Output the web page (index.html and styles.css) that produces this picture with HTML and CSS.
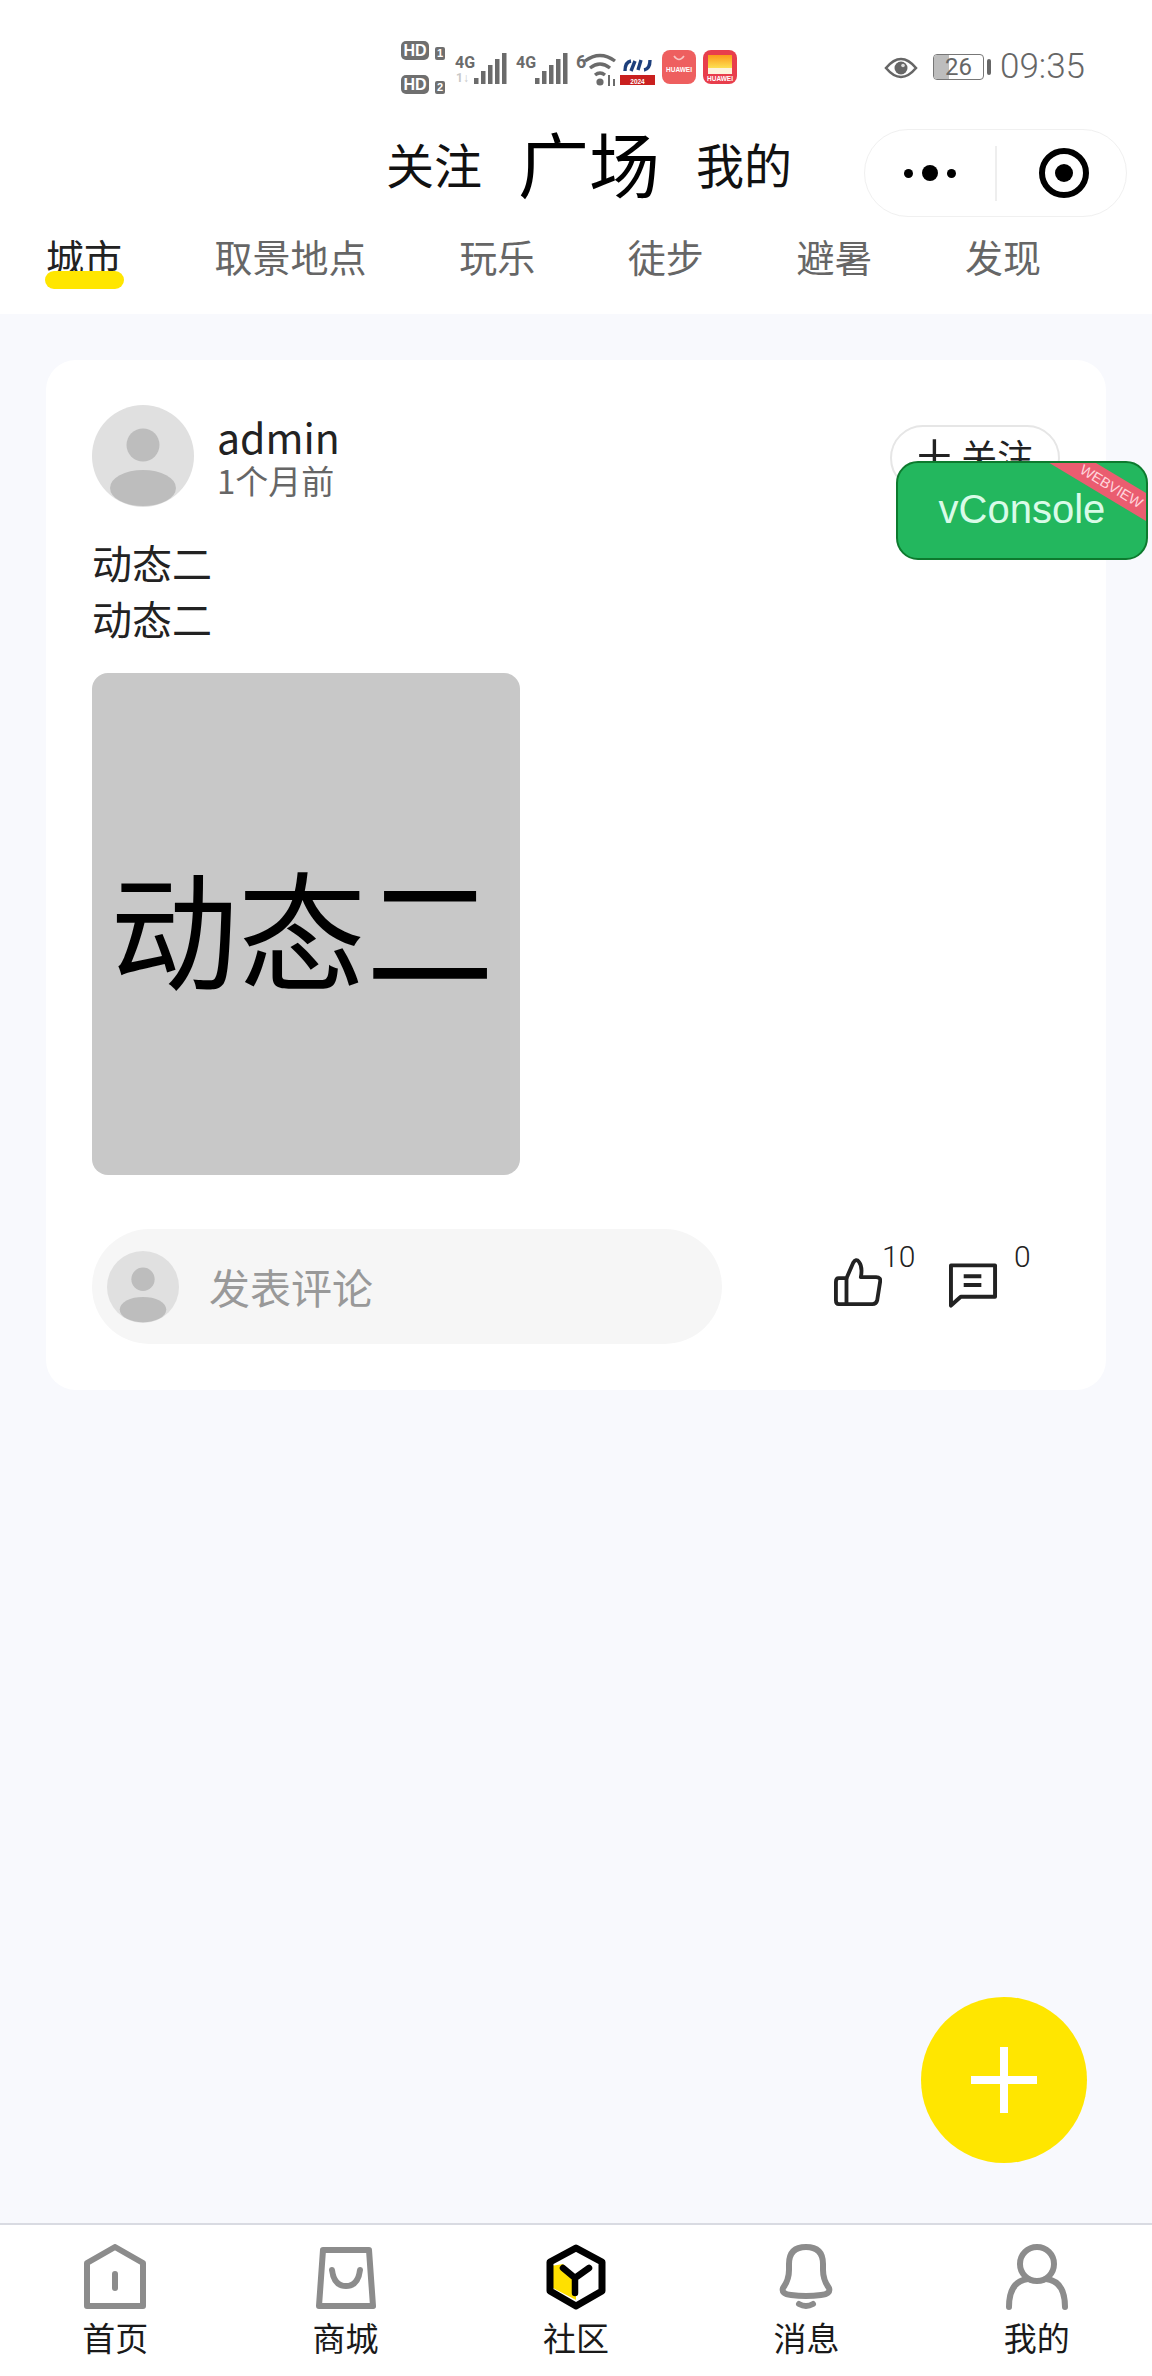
FILE: index.html
```html
<!DOCTYPE html>
<html lang="zh">
<head>
<meta charset="utf-8">
<title>广场</title>
<link rel="stylesheet" href="styles.css">
</head>
<body>
<div class="page">
  <header class="header">
    <div class="status">
      <div class="sims">
        <div class="sim"><span class="hd">HD</span><span class="simno">1</span></div>
        <div class="sim"><span class="hd">HD</span><span class="simno">2</span></div>
      </div>
      <svg class="signal" width="52" height="34" viewBox="0 0 52 34">
        <text x="0" y="16" class="net">4G</text>
        <text x="1" y="30" class="net faint">1↓</text>
        <rect x="19" y="26" width="4.500" height="6"/><rect x="26" y="19" width="4.500" height="13"/><rect x="33" y="13" width="4.500" height="19"/><rect x="40" y="7" width="4.500" height="25"/><rect x="47" y="1" width="4.500" height="31"/>
      </svg>
      <svg class="signal second" width="52" height="34" viewBox="0 0 52 34">
        <text x="0" y="16" class="net">4G</text>
        <rect x="19" y="26" width="4.500" height="6"/><rect x="26" y="19" width="4.500" height="13"/><rect x="33" y="13" width="4.500" height="19"/><rect x="40" y="7" width="4.500" height="25"/><rect x="47" y="1" width="4.500" height="31"/>
      </svg>
      <svg class="wifi" width="40" height="36" viewBox="0 0 40 36">
        <text x="0" y="17" class="net big">6</text>
        <path d="M9 10 Q24 -1 39 10M14 17 Q24 9 34 17M19 24 Q24 20 29 24" fill="none" stroke="#6b6b6b" stroke-width="3.400"/>
        <circle cx="24" cy="31" r="3.600" fill="#6b6b6b"/>
        <path d="M33 24V35M38 28V35" stroke="#6b6b6b" stroke-width="2"/>
      </svg>
      <svg class="app sync" width="35" height="27" viewBox="0 0 35 27">
        <path d="M11 3 Q5 4 5 13M11 13 L15 3M21 2 L18 12M24 12 Q30 11 30 2" fill="none" stroke="#1d3f7c" stroke-width="3.400"/>
        <rect x="0" y="17" width="35" height="10" fill="#c9201f"/>
        <text x="17.500" y="25.500" class="tiny" text-anchor="middle">2024</text>
      </svg>
      <svg class="app" width="34" height="34" viewBox="0 0 34 34">
        <rect width="34" height="34" rx="8" fill="#ee5f5f"/>
        <path d="M12 6 Q17 13 22 6" fill="none" stroke="#f9c4c2" stroke-width="1.600"/>
        <text x="17" y="22" class="tiny" text-anchor="middle">HUAWEI</text>
      </svg>
      <svg class="app" width="34" height="34" viewBox="0 0 34 34">
        <defs><linearGradient id="sun" x1="0" y1="0" x2="0" y2="1"><stop offset="0" stop-color="#fb9a1a"/><stop offset="1" stop-color="#fde052"/></linearGradient></defs>
        <rect width="34" height="34" rx="8" fill="#e83e4c"/>
        <rect x="5" y="5" width="24" height="13" fill="url(#sun)"/>
        <rect x="5" y="18" width="24" height="6" fill="#fdf3dc"/>
        <text x="17" y="30.500" class="tiny" text-anchor="middle">HUAWEI</text>
      </svg>
      <svg class="eye" width="34" height="24" viewBox="0 0 34 24">
        <path d="M2 12 Q17 -6 32 12 Q17 30 2 12Z" fill="none" stroke="#666" stroke-width="2.600"/>
        <circle cx="17" cy="12" r="6.500" fill="#666"/>
        <circle cx="19" cy="9.500" r="1.800" fill="#ddd"/>
      </svg>
      <div class="battery"><span class="level"></span><span class="pct">26</span></div>
      <span class="nub"></span>
      <span class="clock">09:35</span>
    </div>
    <div class="titlebar">
      <span class="title">关注</span>
      <span class="title current">广场</span>
      <span class="title">我的</span>
      <div class="capsule">
        <div class="cap-left">
          <span class="dot"></span><span class="dot large"></span><span class="dot"></span>
        </div>
        <span class="cap-line"></span>
        <div class="cap-right"><span class="target"></span></div>
      </div>
    </div>
    <nav class="tabs">
      <span class="tab active">城市</span>
      <span class="tab">取景地点</span>
      <span class="tab">玩乐</span>
      <span class="tab">徒步</span>
      <span class="tab">避暑</span>
      <span class="tab">发现</span>
    </nav>
  </header>

  <main class="feed">
    <article class="card">
      <div class="author">
        <svg class="avatar" viewBox="0 0 102 102">
          <circle cx="51" cy="51" r="51" fill="#e0e0e0"/>
          <circle cx="51" cy="40" r="16.500" fill="#bdbdbd"/>
          <ellipse cx="51" cy="83" rx="33" ry="18" fill="#bdbdbd"/>
        </svg>
        <div class="who">
          <div class="name">admin</div>
          <div class="when">1个月前</div>
        </div>
        <span class="follow"><span class="plus">+</span>关注</span>
      </div>
      <div class="body">
        <p>动态二</p>
        <p>动态二</p>
      </div>
      <div class="photo"><span>动态二</span></div>
      <div class="actions">
        <div class="comment-box">
          <svg class="avatar small" viewBox="0 0 102 102">
            <circle cx="51" cy="51" r="51" fill="#e0e0e0"/>
            <circle cx="51" cy="40" r="16.500" fill="#bdbdbd"/>
            <ellipse cx="51" cy="83" rx="33" ry="18" fill="#bdbdbd"/>
          </svg>
          <span class="placeholder">发表评论</span>
        </div>
        <div class="stat like">
          <svg width="48" height="50" viewBox="0 0 50 50" fill="none" stroke="#222" stroke-width="4" stroke-linejoin="round">
            <path d="M13 21 L20 5 Q23 0 26 4 Q30 9 28 20 H44 Q49 20 48 25 L45 44 Q44 48 40 48 H5 Q2 48 2 44 V25 Q2 21 5 21 Z"/>
            <path d="M13 21 V48"/>
          </svg>
          <span class="count">10</span>
        </div>
        <div class="stat reply">
          <svg width="49" height="46" viewBox="0 0 50 46" fill="none" stroke="#222" stroke-width="4" stroke-linejoin="round">
            <path d="M2 3 H47 V35 H12 L2 44 Z"/>
            <path d="M15 14 H33 M15 23 H33"/>
          </svg>
          <span class="count">0</span>
        </div>
      </div>
    </article>
    <button class="fab" aria-label="发布">
      <svg width="66" height="66" viewBox="0 0 66 66"><path d="M33 0V66M0 33H66" stroke="#fff" stroke-width="8"/></svg>
    </button>
  </main>

  <footer class="tabbar">
    <div class="item">
      <svg width="62" height="66" viewBox="0 0 62 66" fill="none" stroke="#8c8c8c" stroke-width="6" stroke-linejoin="round" stroke-linecap="round">
        <path d="M31 3 L59 19 V62 H3 V19 Z"/><path d="M31 30 V44"/>
      </svg>
      <span>首页</span>
    </div>
    <div class="item">
      <svg width="62" height="66" viewBox="0 0 62 66" fill="none" stroke="#8c8c8c" stroke-width="6" stroke-linejoin="round" stroke-linecap="round">
        <path d="M8 6 H54 L58 62 H4 Z"/><path d="M17 26 Q19 42 31 42 Q43 42 45 26"/>
      </svg>
      <span>商城</span>
    </div>
    <div class="item">
      <svg width="62" height="66" viewBox="0 0 62 66" fill="none">
        <path d="M6 22 L18 20 L31 34 V56 L6 43 Z" fill="#ffe000"/>
        <path d="M31 4 L57 18 V47 L31 62 L5 47 V18 Z" stroke="#000" stroke-width="7" stroke-linejoin="round"/>
        <path d="M18 24 L30 34 L44 24 M30 34 V49" stroke="#000" stroke-width="6.500" stroke-linecap="round" stroke-linejoin="round"/>
      </svg>
      <span>社区</span>
    </div>
    <div class="item">
      <svg width="62" height="66" viewBox="0 0 62 66" fill="none" stroke="#8c8c8c" stroke-width="6" stroke-linecap="round" stroke-linejoin="round">
        <path d="M8 44 Q14 36 14 26 V20 Q14 3 31 3 Q48 3 48 20 V26 Q48 36 54 44 Q56 50 46 51 Q31 53 16 51 Q6 50 8 44 Z"/>
        <path d="M24 60 Q31 64 38 60"/>
      </svg>
      <span>消息</span>
    </div>
    <div class="item">
      <svg width="62" height="66" viewBox="0 0 62 66" fill="none" stroke="#8c8c8c" stroke-width="6" stroke-linecap="round">
        <circle cx="31" cy="20" r="17"/>
        <path d="M3 63 Q3 37 22 35 M59 63 Q59 37 40 35"/>
      </svg>
      <span>我的</span>
    </div>
  </footer>

  <div class="vconsole">
    <span class="ribbon"><span>WEBVIEW</span></span>
    <span class="vc-label">vConsole</span>
  </div>
</div>
</body>
</html>
```

FILE: styles.css
```css
* { box-sizing: border-box; }
html, body { margin: 0; padding: 0; }
body {
  width: 1152px;
  height: 2376px;
  background: #fff;
  font-family: "Noto Sans CJK SC", "Noto Sans", sans-serif;
  color: #222;
  overflow: hidden;
}
.page { position: relative; width: 1152px; height: 2376px; display: flex; flex-direction: column; }

/* status bar */
.header { background: #fff; height: 314px; flex: none; }
.status { height: 100px; padding: 42px 0 0 401px; display: flex; align-items: flex-start; }
.status svg { overflow: visible; }
.sims { display: flex; flex-direction: column; gap: 16px; width: 54px; flex: none; }
.sim { display: flex; align-items: flex-end; gap: 6px; height: 18px; }
.hd {
  width: 28px; height: 19px; border-radius: 5px; background: #6f6f6f; color: #fff;
  font: 700 16px/19px "Liberation Sans", sans-serif; text-align: center;
}
.simno {
  width: 10px; height: 13px; border-radius: 2px; background: #6f6f6f; color: #fff;
  font: 700 11px/13px "Liberation Sans", sans-serif; text-align: center;
}
.signal { margin-top: 10px; flex: none; }
.signal rect { fill: #6b6b6b; }
.signal.second { margin-left: 9px; }
.net { font: 700 16px "Roboto", sans-serif; fill: #6b6b6b; }
.net.faint { fill: #c8c8c8; font-size: 12px; }
.net.big { font-size: 18px; }
.wifi { margin: 9px 0 0 8px; flex: none; }
.app { margin-top: 8px; margin-left: 7px; flex: none; }
.app.sync { margin-top: 16px; margin-left: 4px; }
.tiny { font: 700 6.500px "Liberation Sans", sans-serif; fill: #fff; }
.eye { margin: 14px 0 0 147px; flex: none; }
.battery {
  position: relative; margin: 12px 0 0 15px; width: 51px; height: 26px; flex: none;
  border: 1.500px solid #777; border-radius: 4px; overflow: hidden;
}
.level { display: block; width: 15px; height: 100%; background: #bdbdbd; }
.pct {
  position: absolute; inset: 0; text-align: center;
  font: 400 24px/24px "Roboto", sans-serif; color: #666;
}
.nub { width: 4px; height: 16px; margin: 17px 0 0 3px; background: #666; border-radius: 2px; flex: none; }
.clock { margin: 3px 0 0 9px; font: 300 35px/44px "Roboto", sans-serif; color: #666; }

/* title bar */
.titlebar { height: 125px; padding-left: 386px; display: flex; align-items: center; position: relative; }
.title { font-size: 48px; line-height: 64px; font-weight: 400; margin-right: 36px; color: #111; }
.title.current { font-size: 71px; line-height: 80px; margin-top: -4px; color: #000; }
.capsule {
  position: absolute; right: 25px; top: 29px; width: 263px; height: 88px;
  display: flex; align-items: center;
  border: 1.500px solid #f0f0f0; border-radius: 44px; background: #fff;
}
.cap-left { width: 130px; display: flex; justify-content: center; align-items: center; gap: 9px; }
.dot { width: 9px; height: 9px; border-radius: 50%; background: #000; }
.dot.large { width: 16px; height: 16px; }
.cap-line { width: 1.500px; height: 55px; background: #eee; flex: none; }
.cap-right { flex: 1; display: flex; justify-content: center; padding-left: 6px; }
.target {
  position: relative; display: block; width: 50px; height: 50px; border-radius: 50%;
  border: 6px solid #000; background: #fff;
}
.target::after {
  content: ""; position: absolute; left: 10px; top: 10px; width: 18px; height: 18px;
  border-radius: 50%; background: #000;
}

/* tabs */
.tabs { height: 89px; padding: 3px 0 0 46px; display: flex; gap: 92.600px; align-items: flex-start; }
.tab { position: relative; font-size: 38px; line-height: 56px; color: #666; }
.tab.active { color: #222; }
.tab.active::after {
  content: ""; position: absolute; left: -1px; right: -2px; top: 43px; height: 18px;
  border-radius: 9px; background: #ffe600;
}

/* feed */
.feed { position: relative; flex: 1; background: #f8f9fd; padding: 46px 46px 0; }
.card { background: #fff; border-radius: 30px; height: 1030px; padding: 45px 46px 0; }
.author { position: relative; display: flex; align-items: flex-start; }
.avatar { width: 102px; height: 102px; display: block; flex: none; }
.avatar.small { width: 72px; height: 72px; }
.who { margin-left: 23px; }
.name { font-size: 41px; line-height: 50px; margin-top: 6px; color: #222; }
.when { font-size: 33px; line-height: 38px; color: #666; }
.follow {
  position: absolute; right: 0; top: 20px; width: 170px; height: 66px; padding-bottom: 6px;
  display: flex; align-items: center; justify-content: center; gap: 9px;
  border: 2px solid #e6e6e6; border-radius: 34px; font-size: 36px; color: #222; background: #fff;
}
.plus { position: relative; top: -4px; font-size: 66px; line-height: 54px; font-weight: 300; }
.body { margin-top: 27px; font-size: 40px; line-height: 56px; color: #222; }
.body p { margin: 0; }
.photo {
  width: 428px; height: 502px; margin-top: 27px; border-radius: 16px; background: #c8c8c8;
  display: flex; align-items: center; justify-content: center; padding: 4px 8px 0 0;
  font-size: 128px; line-height: 140px; color: #000; white-space: nowrap;
}
.actions { position: relative; margin-top: 54px; height: 115px; }
.comment-box {
  width: 630px; height: 115px; border-radius: 58px; background: #f6f6f6;
  display: flex; align-items: center; padding-left: 15px;
}
.placeholder { margin: -2px 0 0 30px; font-size: 41px; color: #999; }
.stat { position: absolute; display: flex; align-items: flex-start; }
.stat.like { left: 742px; top: 28px; }
.stat.reply { left: 857px; top: 33px; }
.count { position: absolute; top: -18px; font: 300 30px/36px "Roboto", sans-serif; color: #222; }
.like .count { left: 48px; }
.reply .count { left: 65px; top: -23px; }
.fab {
  position: absolute; left: 921px; top: 1683px; width: 166px; height: 166px; padding: 0;
  display: flex; align-items: center; justify-content: center;
  border: 0; border-radius: 50%; background: #ffe600;
}

/* bottom bar */
.tabbar {
  flex: none; height: 153px; background: #fff; border-top: 2px solid #d9dbe2;
  display: grid; grid-template-columns: repeat(5, 1fr); padding-top: 19px;
}
.item { display: flex; flex-direction: column; align-items: center; }
.item svg { display: block; }
.item span { font-size: 33px; line-height: 46px; color: #1a1a1a; margin-top: 4px; }

/* debug button */
.vconsole {
  position: absolute; left: 896px; top: 461px; width: 252px; height: 99px;
  display: flex; align-items: center; justify-content: center;
  background: #23b75e; border: 2px solid #0d7a2e; border-radius: 22px; overflow: hidden;
}
.vc-label { font: 400 40px "Liberation Sans", sans-serif; color: #d9fbe8; margin-top: -2px; }
.ribbon {
  position: absolute; left: 98px; top: 2px; width: 200px; height: 24px;
  background: #ea5d70; transform: rotate(31deg);
  display: flex; align-items: center; justify-content: center;
}
.ribbon span { font: 400 14.500px "Liberation Sans", sans-serif; color: #ffd5dc; margin-left: 36px; }
```
